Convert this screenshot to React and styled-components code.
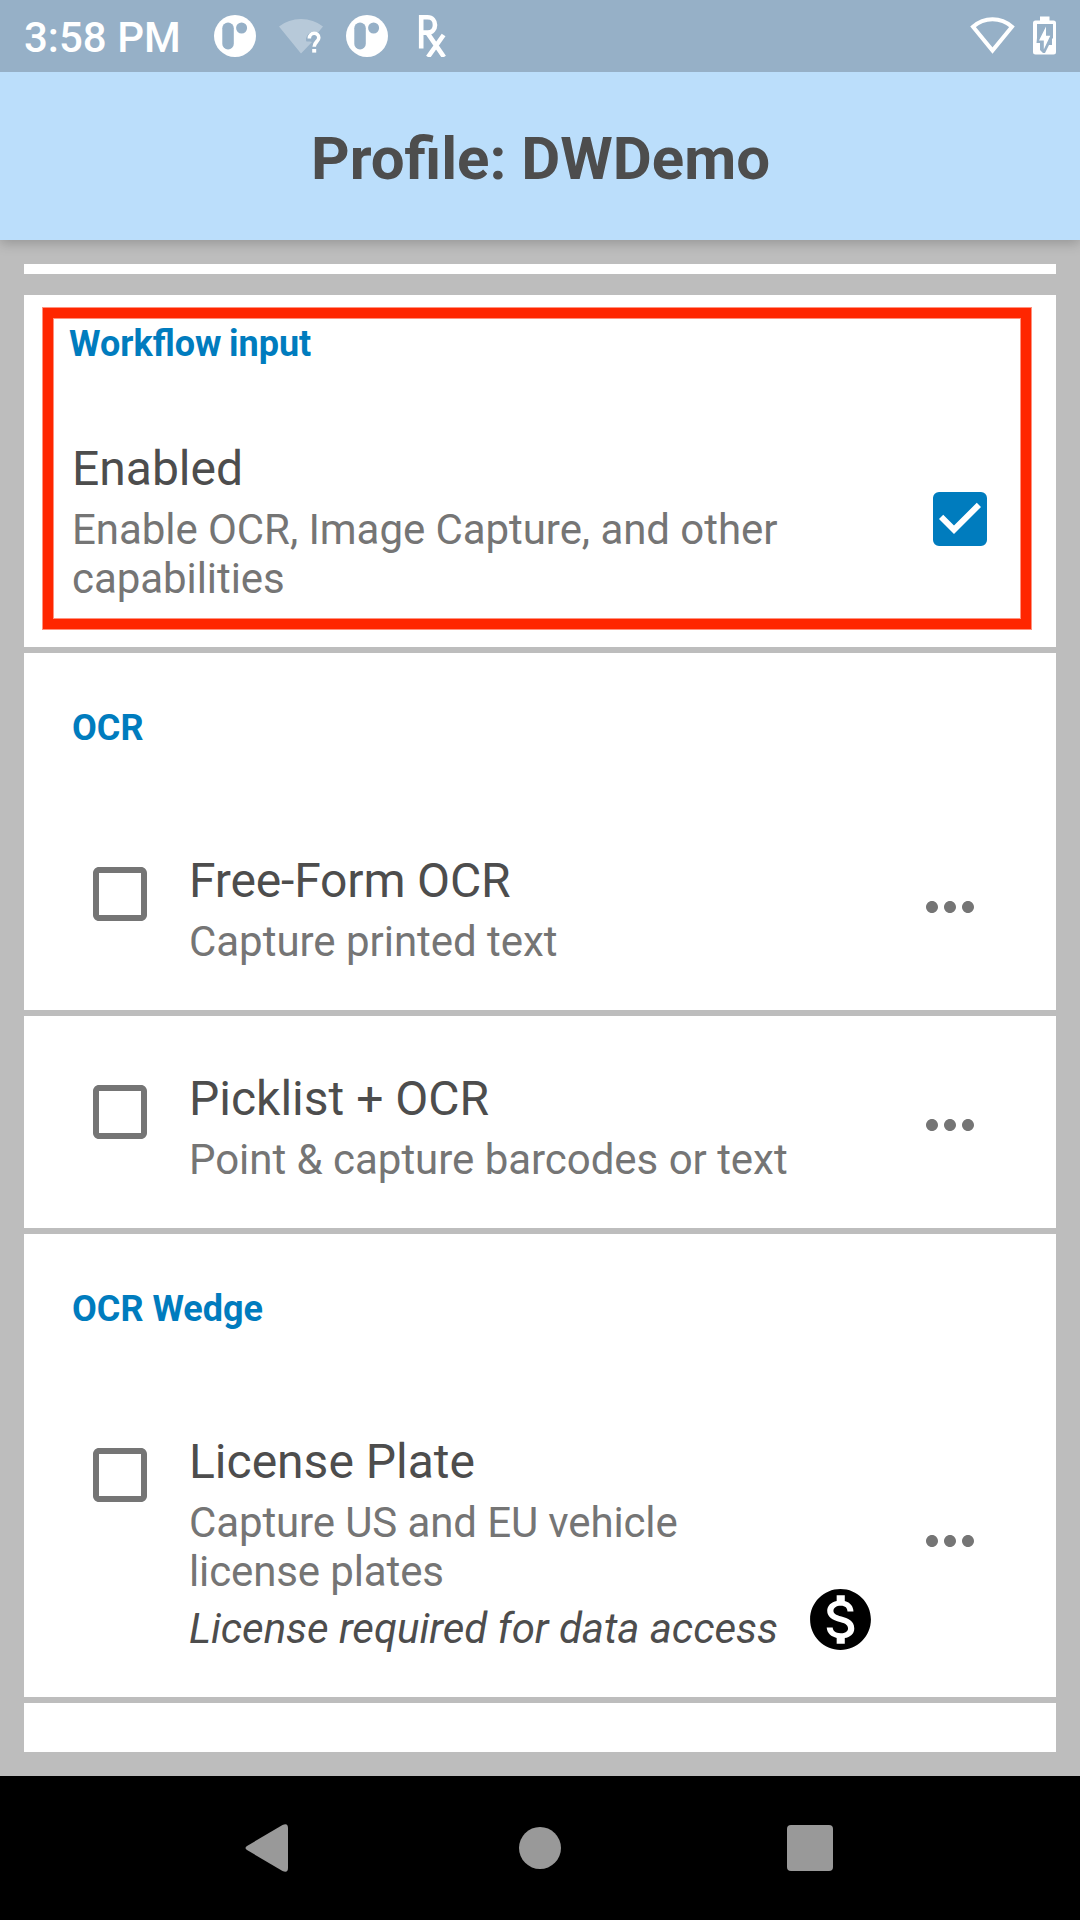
import React from "react";
import styled, { createGlobalStyle } from "styled-components";
import {
  MdCheckBox,
  MdCheckBoxOutlineBlank,
  MdMonetizationOn,
  MdMoreHoriz,
} from "react-icons/md";

const GlobalStyle = createGlobalStyle`
  *, *::before, *::after { box-sizing: border-box; }
  body { margin: 0; background: #bdbdbd; }
`;

const Screen = styled.div`
  display: flex;
  flex-direction: column;
  width: 1080px;
  height: 1920px;
  overflow: hidden;
  background: #bdbdbd;
  color: #4d4d4d;
  font-family: Roboto, "Liberation Sans", sans-serif;
  svg { display: block; flex: none; }
`;

const StatusBar = styled.header`
  position: relative;
  z-index: 1;
  display: flex;
  align-items: flex-start;
  flex: none;
  height: 72px;
  padding: 13px 23px 0 24px;
  background: #96b0c7;
  color: #fff;
`;

const Clock = styled.span`
  width: 190px;
  font-size: 42px;
  line-height: 49px;
  font-weight: 500;
  white-space: nowrap;
`;

const StatusIcons = styled.div`
  display: flex;
  gap: ${(p) => p.$gap}px;
  margin-top: 2px;
  margin-left: ${(p) => (p.$end ? "auto" : "0")};
`;

const AppBar = styled.div`
  display: flex;
  justify-content: center;
  flex: none;
  height: 168px;
  padding: 52px 0 0 1px;
  background: #bbdefb;
  box-shadow: 0 3px 12px rgba(0, 0, 0, 0.22);
`;

const Title = styled.h1`
  margin: 0;
  font-size: 60px;
  line-height: 70px;
  font-weight: 700;
`;

const List = styled.main`
  display: flex;
  flex-direction: column;
  gap: 6px;
  flex: 1;
  padding: 24px 24px 0;
`;

const Strip = styled.div`
  height: ${(p) => p.$height}px;
  margin-bottom: ${(p) => p.$after || 0}px;
  background: #fff;
`;

const Card = styled.section`
  position: relative;
  height: ${(p) => p.$height}px;
  padding: ${(p) => p.$top}px 60px 0 48px;
  background: #fff;
`;

const Highlight = styled.div`
  position: absolute;
  left: 19px;
  top: 13px;
  width: 988px;
  height: 321px;
  border: 10px solid #ff2600;
  box-shadow: 0 0 0 1px rgba(255, 38, 0, 0.5),
    inset 0 0 0 1px rgba(255, 38, 0, 0.5);
`;

const SectionLabel = styled.h2`
  margin: 0 0 ${(p) => p.$after}px ${(p) => p.$shift || 0}px;
  color: #007cbe;
  font-size: 36px;
  line-height: 42px;
  font-weight: 700;
  word-spacing: ${(p) => p.$wordGap || 0}px;
`;

const Row = styled.div`
  display: flex;
  align-items: flex-start;
`;

const CheckSlot = styled.div`
  display: flex;
  width: ${(p) => p.$width}px;
  margin-top: ${(p) => p.$offset}px;
  color: ${(p) => (p.$on ? "#007cbe" : "#757575")};
`;

const TextColumn = styled.div`
  display: flex;
  flex-direction: column;
  flex: 1;
`;

const ItemTitle = styled.div`
  font-size: 48px;
  line-height: 56px;
  letter-spacing: ${(p) => p.$tracking || "normal"};
`;

const ItemText = styled.div`
  margin-top: 8px;
  color: #757575;
  font-size: 42px;
  line-height: 49px;
  letter-spacing: ${(p) => p.$tracking || "-0.03px"};
`;

const LicenseLine = styled.div`
  display: flex;
  gap: 22px;
  height: 58px;
  color: #4d4d4d;
  font-size: 42px;
  line-height: 49px;
  letter-spacing: -0.03px;
  font-style: italic;
  white-space: nowrap;
  span { padding-top: 8px; width: 593px; }
  svg { color: #000; margin-top: -13px; }
`;

const MoreButton = styled.div`
  align-self: center;
  width: 72px;
  margin-top: ${(p) => p.$offset}px;
  color: #757575;
`;

const ItemInset = styled.div`
  padding-left: 12px;
  margin-right: 10.5px;
`;

const NavBar = styled.nav`
  display: flex;
  align-items: center;
  justify-content: space-between;
  flex: none;
  height: 144px;
  padding: 0 247px 0 245px;
  background: #000;
`;

const HomeButton = styled.div`
  width: 42px;
  height: 42px;
  margin-left: 5px;
  border-radius: 50%;
  background: #999;
`;

const RecentsButton = styled.div`
  width: 46px;
  height: 46px;
  border-radius: 4px;
  background: #999;
`;

const NotificationIcon = () => (
  <svg width="42" height="42" viewBox="0 0 42 42">
    <circle cx="21" cy="21" r="21" fill="#fff" />
    <rect x="8.300" y="7.500" width="11.500" height="27" rx="5.750" fill="#96b0c7" />
    <circle cx="27.600" cy="13" r="5.500" fill="#96b0c7" />
  </svg>
);

const WifiUnknownIcon = () => (
  <svg width="44" height="42" viewBox="0 0 44 42">
    <path
      d="M0 11.5Q9.500 4 22 4T44 11.5L39.500 17Q32 15 28.500 20Q26 24 27.500 26.500H31L33 27L22 38.500Z"
      fill="#fff"
      fillOpacity="0.32"
    />
    <path
      d="M30.300 23.500C30.300 16.800 39.800 16.600 39.800 22.700C39.800 26.600 35.200 26.800 35.200 31.800"
      fill="none"
      stroke="#fff"
      strokeWidth="3.600"
    />
    <rect x="33.200" y="34" width="4" height="3.600" fill="#fff" />
  </svg>
);

const RxSlot = styled.span`
  display: flex;
  margin-left: 7px;
`;

const PrescriptionIcon = () => (
  <svg width="30" height="42" viewBox="0 0 30 42" fill="none" stroke="#fff">
    <path
      d="M3.200 33.500V2.300H9.500C19.500 2.300 19.500 17.600 9.500 17.600H3.200M9.500 18L26 42M25.600 20L10 42"
      strokeWidth="4.600"
    />
  </svg>
);

const WifiIcon = () => (
  <svg width="46" height="42" viewBox="0 0 46 42">
    <path
      d="M3 11.700Q11.500 4.200 22.500 4.200T42 11.700L22.500 35.600Z"
      fill="none"
      stroke="#fff"
      strokeWidth="4"
    />
  </svg>
);

const BatteryIcon = () => (
  <svg width="24" height="42" viewBox="0 0 24 42">
    <path
      fill="#fff"
      fillRule="evenodd"
      d="M7 1.500H16.500V5.500H20.500Q23 5.500 23 8V37Q23 39.500 20.500 39.500H2.500Q0 39.500 0 37V8Q0 5.500 2.500 5.500H7ZM4 9V23L3.500 28H7V35L10 38H12L16 30H19V24L20 23V9Z"
    />
    <path d="M13 11.500L6 25.500H10.800V34.500L17.300 20.700H13Z" fill="#fff" />
  </svg>
);

const BackIcon = () => (
  <svg width="43" height="48" viewBox="0 0 43 48">
    <path
      d="M2 22L37.500 1Q43 -1.500 43 4V44Q43 49.500 37.500 47L2 26Q-1 24 2 22Z"
      fill="#999"
    />
  </svg>
);

function CaptureRow({
  title,
  text,
  license,
  moreOffset,
  titleTracking,
  textTracking,
}) {
  return (
    <ItemInset>
      <Row>
        <CheckSlot $offset={5} $width={105}>
          <MdCheckBoxOutlineBlank size={72} />
        </CheckSlot>
        <TextColumn>
          <ItemTitle $tracking={titleTracking}>{title}</ItemTitle>
          <ItemText $tracking={textTracking}>{text}</ItemText>
          {license && (
            <LicenseLine>
              <span>{license}</span>
              <MdMonetizationOn size={73} />
            </LicenseLine>
          )}
        </TextColumn>
        <MoreButton $offset={moreOffset}>
          <MdMoreHoriz size={72} />
        </MoreButton>
      </Row>
    </ItemInset>
  );
}

export default function App() {
  return (
    <>
      <GlobalStyle />
      <Screen>
        <StatusBar>
          <Clock>3:58 PM</Clock>
          <StatusIcons $gap={23}>
            <NotificationIcon />
            <WifiUnknownIcon />
            <NotificationIcon />
            <RxSlot>
              <PrescriptionIcon />
            </RxSlot>
          </StatusIcons>
          <StatusIcons $end $gap={17}>
            <WifiIcon />
            <BatteryIcon />
          </StatusIcons>
        </StatusBar>
        <AppBar>
          <Title>Profile: DWDemo</Title>
        </AppBar>
        <List>
          <Strip $height={10} $after={15} />
          <Card $height={352} $top={27.5}>
            <SectionLabel $after={76.5} $shift={-3} $wordGap={-1.5}>
              Workflow input
            </SectionLabel>
            <Row>
              <TextColumn>
                <ItemTitle>Enabled</ItemTitle>
                <ItemText $tracking="-0.06px">
                  Enable OCR, Image Capture, and other
                  <br />
                  capabilities
                </ItemText>
              </TextColumn>
              <CheckSlot $on $offset={42} $width={72}>
                <MdCheckBox size={72} />
              </CheckSlot>
            </Row>
            <Highlight />
          </Card>
          <Card $height={357} $top={54}>
            <SectionLabel $after={104}>OCR</SectionLabel>
            <CaptureRow
              title="Free-Form OCR"
              titleTracking="-0.15px"
              text="Capture printed text"
              moreOffset={-5}
            />
          </Card>
          <Card $height={212} $top={55}>
            <CaptureRow
              title="Picklist + OCR"
              text="Point &amp; capture barcodes or text"
              moreOffset={-5}
            />
          </Card>
          <Card $height={463} $top={54}>
            <SectionLabel $after={104}>OCR Wedge</SectionLabel>
            <CaptureRow
              title="License Plate"
              text={
                <>
                  Capture US and EU vehicle
                  <br />
                  license plates
                </>
              }
              textTracking="-0.12px"
              license="License required for data access"
              moreOffset={-6}
            />
          </Card>
          <Strip $height={49} />
        </List>
        <NavBar>
          <BackIcon />
          <HomeButton />
          <RecentsButton />
        </NavBar>
      </Screen>
    </>
  );
}
